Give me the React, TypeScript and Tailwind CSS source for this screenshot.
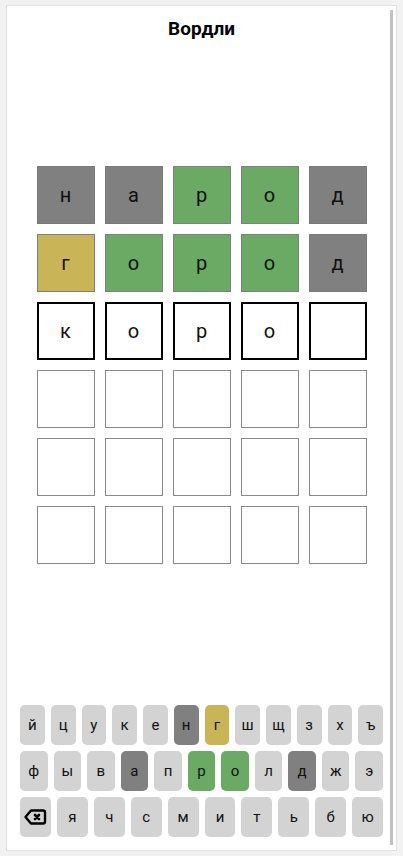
type Tone = "absent" | "present" | "correct" | "active" | "empty";

const board: { ch: string; tone: Tone }[][] = [
  [
    { ch: "н", tone: "absent" },
    { ch: "а", tone: "absent" },
    { ch: "р", tone: "correct" },
    { ch: "о", tone: "correct" },
    { ch: "д", tone: "absent" },
  ],
  [
    { ch: "г", tone: "present" },
    { ch: "о", tone: "correct" },
    { ch: "р", tone: "correct" },
    { ch: "о", tone: "correct" },
    { ch: "д", tone: "absent" },
  ],
  [
    { ch: "к", tone: "active" },
    { ch: "о", tone: "active" },
    { ch: "р", tone: "active" },
    { ch: "о", tone: "active" },
    { ch: "", tone: "active" },
  ],
  ...[0, 1, 2].map(() =>
    Array.from({ length: 5 }, () => ({ ch: "", tone: "empty" as Tone })),
  ),
];

const tileStyles: Record<Tone, string> = {
  absent: "bg-[#808080] border border-[#7a7a7a]",
  present: "bg-[#c9b458] border border-[#808080]",
  correct: "bg-[#6aaa64] border border-[#808080]",
  active: "bg-white border-2 border-black",
  empty: "bg-white border border-[#8a8a8a]",
};

const keyRows = [
  ["й", "ц", "у", "к", "е", "н", "г", "ш", "щ", "з", "х", "ъ"],
  ["ф", "ы", "в", "а", "п", "р", "о", "л", "д", "ж", "э"],
  ["⌫", "я", "ч", "с", "м", "и", "т", "ь", "б", "ю"],
];

const keyColors: Record<string, string> = {
  н: "bg-[#808080]",
  а: "bg-[#808080]",
  д: "bg-[#808080]",
  г: "bg-[#c9b458]",
  р: "bg-[#6aaa64]",
  о: "bg-[#6aaa64]",
};

function BackspaceIcon() {
  return (
    <svg width="24" height="24" viewBox="0 0 24 24" fill="none">
      <path
        d="M8 5.5h12a2 2 0 0 1 2 2v9a2 2 0 0 1-2 2H8L2.5 12z"
        stroke="#000"
        strokeWidth="2.4"
        strokeLinejoin="round"
      />
      <path
        d="M12 10l4 4M16 10l-4 4"
        stroke="#000"
        strokeWidth="2.6"
        strokeLinecap="round"
      />
    </svg>
  );
}

export default function App() {
  return (
    <div
      className="min-h-[856px] bg-[#f2f2f2] px-[6px] py-[5px]"
      style={{ fontFamily: "Roboto, 'Noto Sans', sans-serif" }}
    >
      <div className="relative flex h-[846px] flex-col border border-[#e2e2e2] bg-white">
        <h1 className="mt-[9px] h-[28px] text-center text-[19px] leading-[28px] font-bold text-black">
          Вордли
        </h1>

        <div className="mt-[123px] flex flex-col items-center gap-[10px]">
          {board.map((row, r) => (
            <div key={r} className="flex gap-[10px]">
              {row.map((t, c) => (
                <div
                  key={c}
                  className={`flex h-[58px] w-[58px] items-center justify-center text-[20px] text-[#111] ${tileStyles[t.tone]}`}
                >
                  {t.ch}
                </div>
              ))}
            </div>
          ))}
        </div>

        <div className="mx-auto mt-auto mb-[13px] flex w-[363px] flex-col gap-[6px]">
          {keyRows.map((row, r) => (
            <div key={r} className="flex gap-[6px]">
              {row.map((k) => (
                <div
                  key={k}
                  className={`flex h-[40px] flex-1 items-center justify-center rounded-[5px] text-[15px] text-[#111] ${keyColors[k] ?? "bg-[#d3d3d3]"}`}
                >
                  {k === "⌫" ? <BackspaceIcon /> : k}
                </div>
              ))}
            </div>
          ))}
        </div>

        <div className="absolute top-[4px] right-[3px] bottom-[5px] w-[3px] bg-[#c1c1c1]" />
      </div>
    </div>
  );
}
